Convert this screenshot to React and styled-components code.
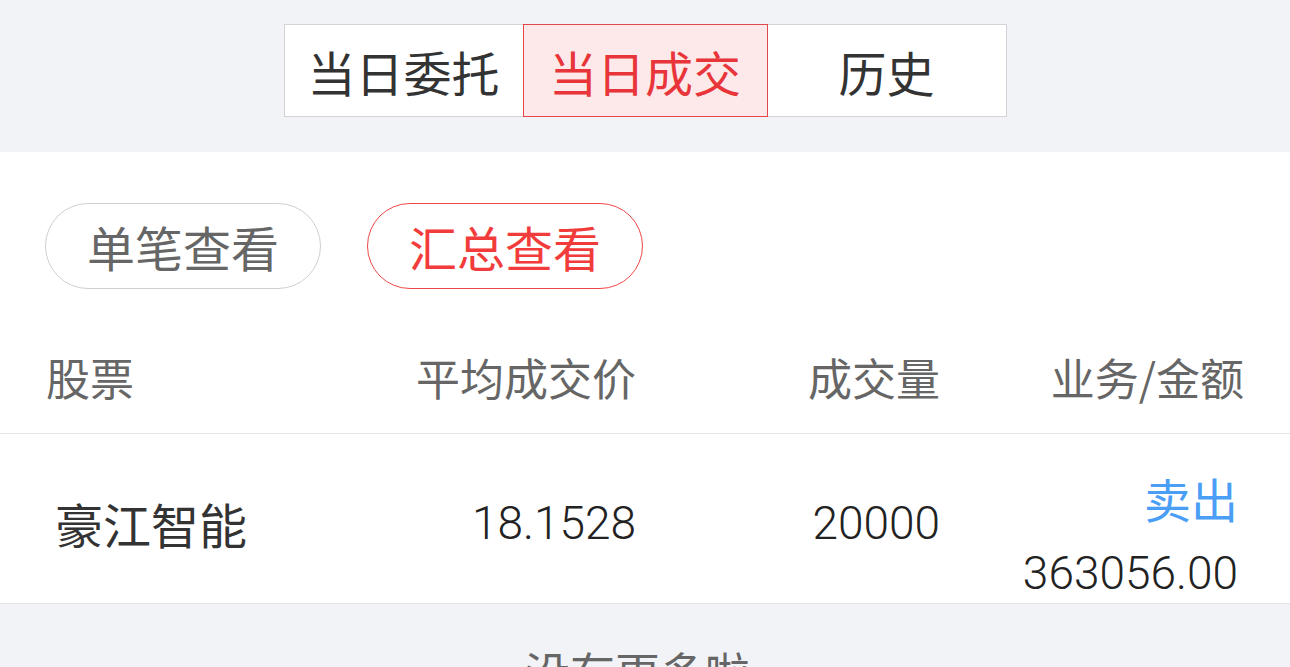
import styled, { createGlobalStyle } from "styled-components";

const GlobalStyle = createGlobalStyle`
  html, body {
    margin: 0;
    padding: 0;
    background: #f2f3f7;
    font-family: "Noto Sans CJK SC", "Noto Sans", sans-serif;
  }
`;

const Page = styled.div`
  width: 1290px;
  height: 667px;
  overflow: hidden;
  background: #f2f3f7;
`;

const TopBar = styled.div`
  height: 152px;
  box-sizing: border-box;
  padding-top: 24px;
  display: flex;
  justify-content: center;
`;

const Segmented = styled.div`
  display: flex;
  height: 93px;
  box-sizing: border-box;
  border: 1px solid #d4d4d8;
  background: #fff;
`;

const Segment = styled.div`
  box-sizing: border-box;
  display: flex;
  align-items: center;
  justify-content: center;
  font-size: 48px;
  color: ${(p) => (p.active ? "#e8353a" : "#333")};
  background: ${(p) => (p.active ? "#fde9ea" : "transparent")};
  border: ${(p) => (p.active ? "1px solid #e4474a" : "none")};
  margin: ${(p) => (p.active ? "-1px 0" : "0")};
  width: ${(p) => (p.active ? "245px" : "238px")};
`;

const Panel = styled.div`
  background: #fff;
  border-bottom: 1px solid #e3e3e8;
`;

const PillRow = styled.div`
  display: flex;
  gap: 46px;
  padding: 51px 0 0 45px;
`;

const Pill = styled.div`
  width: 276px;
  height: 86px;
  box-sizing: border-box;
  border-radius: 43px;
  border: 1px solid ${(p) => (p.active ? "#f04646" : "#cfcfcf")};
  color: ${(p) => (p.active ? "#f23c3c" : "#666")};
  display: flex;
  align-items: center;
  justify-content: center;
  font-size: 48px;
`;

const Grid = styled.div`
  display: grid;
  grid-template-columns: 290px 300px 304px 304px;
  padding: 0 46px;
  align-items: start;
`;

const HeadRow = styled(Grid)`
  height: 145px;
  box-sizing: border-box;
  padding-top: 66px;
  border-bottom: 1px solid #e3e3e8;
`;

const HeadCell = styled.div`
  font-size: 44px;
  line-height: 44px;
  color: #666;
  text-align: ${(p) => (p.left ? "left" : "right")};
  white-space: nowrap;
`;

const DataRow = styled(Grid)`
  height: 169px;
  box-sizing: border-box;
`;

const NameCell = styled.div`
  padding: 64px 0 0 9px;
  font-size: 48px;
  line-height: 50px;
  color: #333;
`;

const NumCell = styled.div`
  padding-top: 64px;
  font-family: Roboto, "Noto Sans", sans-serif;
  font-weight: 300;
  font-size: 46px;
  line-height: 50px;
  color: #222;
  text-align: right;
`;

const SideCell = styled.div`
  padding: 39px 6px 0 0;
  display: flex;
  flex-direction: column;
  align-items: flex-end;
  gap: 25px;
`;

const Action = styled.div`
  font-size: 47px;
  line-height: 50px;
  color: ${(p) => (p.sell ? "#4a9ef5" : "#f23c3c")};
`;

const Amount = styled.div`
  font-family: Roboto, "Noto Sans", sans-serif;
  font-weight: 300;
  font-size: 46px;
  line-height: 50px;
  color: #222;
`;

const Footer = styled.div`
  padding-top: 45px;
  text-align: center;
  font-size: 45px;
  line-height: 45px;
  color: #666;
  margin-left: -15px;
`;

const trades = [
  { name: "豪江智能", price: "18.1528", qty: "20000", side: "卖出", amount: "363056.00" },
];

export default function App() {
  return (
    <Page>
      <GlobalStyle />
      <TopBar>
        <Segmented>
          <Segment>当日委托</Segment>
          <Segment active>当日成交</Segment>
          <Segment>历史</Segment>
        </Segmented>
      </TopBar>
      <Panel>
        <PillRow>
          <Pill>单笔查看</Pill>
          <Pill active>汇总查看</Pill>
        </PillRow>
        <HeadRow>
          <HeadCell left>股票</HeadCell>
          <HeadCell>平均成交价</HeadCell>
          <HeadCell>成交量</HeadCell>
          <HeadCell>业务/金额</HeadCell>
        </HeadRow>
        {trades.map((t) => (
          <DataRow key={t.name}>
            <NameCell>{t.name}</NameCell>
            <NumCell>{t.price}</NumCell>
            <NumCell>{t.qty}</NumCell>
            <SideCell>
              <Action sell={t.side === "卖出"}>{t.side}</Action>
              <Amount>{t.amount}</Amount>
            </SideCell>
          </DataRow>
        ))}
      </Panel>
      <Footer>没有更多啦</Footer>
    </Page>
  );
}
